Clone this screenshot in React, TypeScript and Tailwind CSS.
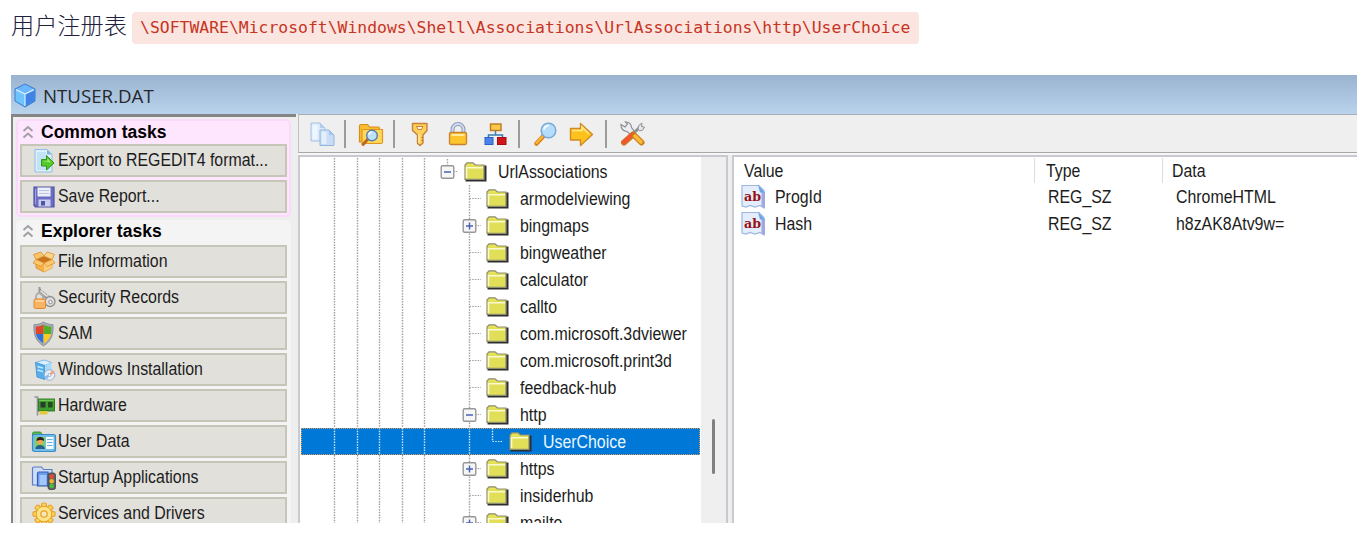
import type { ReactNode } from 'react';

const uiFont = "font-['Liberation_Sans',Arial,sans-serif]";

/* ---------- shared text ---------- */

function Label({ children, className = '' }: { children: ReactNode; className?: string }) {
  return (
    <span
      className={`inline-block origin-left scale-x-[0.908] whitespace-pre text-[17.5px] leading-[20px] ${uiFont} ${className}`}
    >
      {children}
    </span>
  );
}

/* ---------- icons: title and sidebar ---------- */

function CubeIcon() {
  return (
    <svg width="22" height="25" viewBox="0 0 22 25" className="shrink-0">
      <path d="M11 1 21 6v12l-10 6L1 18V6z" fill="#4c9df5" stroke="#3b78c9" strokeWidth="1" />
      <path d="M11 1.6 20.4 6.4 11 11 1.6 6.4z" fill="#6db7ff" />
      <path d="M1.6 6.6 11 11.2v12L1.6 17.8z" fill="#6fc3ff" />
      <path d="M20.4 6.6 11 11.2v12l9.4-5.4z" fill="#3f83e6" />
      <path d="M2 6.6 11 11l9-4.4M11 11v12" fill="none" stroke="#d4efff" strokeWidth="1.2" />
    </svg>
  );
}

function ExportIcon() {
  return (
    <svg width="24" height="26" viewBox="0 0 24 26">
      <path d="M3 1.5h12l5 5V24H3z" fill="#dff0fc" stroke="#8fbfe6" strokeWidth="1" />
      <path d="M5 4h9v5h4v13H5z" fill="#c3e2f8" />
      <path d="M15 1.5v5h5z" fill="#7fb4e2" />
      <path d="M10 11.5h5V7.5l7.5 7.5-7.5 7v-4h-5z" fill="#55c92c" stroke="#2f9417" strokeWidth="1" transform="translate(-.5 0)" />
      <path d="M10.5 13h5v-2.5l3.5 4z" fill="#a3ec70" />
    </svg>
  );
}

function SaveIcon() {
  return (
    <svg width="24" height="26" viewBox="0 0 24 26">
      <path d="M2 3h20v20H3.500L2 21.500z" fill="#6c6ec4" stroke="#50529f" strokeWidth="1.2" />
      <rect x="5.500" y="3.500" width="13" height="9" fill="#eceef8" />
      <path d="M7 6.500h10M7 9.500h10" stroke="#bfc3e4" strokeWidth="1" />
      <rect x="6.500" y="15.500" width="12" height="7" fill="#c9cdee" />
      <rect x="9" y="17" width="4" height="4.500" fill="#5053a6" />
      <path d="M3.500 5v15" stroke="#9fa2e6" strokeWidth="1" />
    </svg>
  );
}

function BoxIcon() {
  return (
    <svg width="24" height="26" viewBox="0 0 24 26">
      <path d="M4 10.500 12 14l8-3.500v8.500l-8 4-8-4z" fill="#f6b04b" stroke="#d98a24" strokeWidth=".8" />
      <path d="M12 14v9l8-4v-8.500z" fill="#fccb78" />
      <path d="M4 10.500 12 7l8 3.500-8 3.500z" fill="#c9751d" />
      <path d="M1.500 5.500 9 3l3 4-8 3.500z" fill="#fbc36a" stroke="#dc912e" strokeWidth=".8" />
      <path d="M22.500 5.500 15 3l-3 4 8 3.500z" fill="#fdd48c" stroke="#dc912e" strokeWidth=".8" />
      <path d="M4 10.500 1 14l8 3.500 3-3.500zM20 10.500l3 3.500-8 3.500-3-3.500z" fill="#fdc872" stroke="#dc912e" strokeWidth=".8" />
    </svg>
  );
}

function SecurityIcon() {
  return (
    <svg width="24" height="26" viewBox="0 0 24 26">
      <path d="M7.500 2v6l10 7" fill="none" stroke="#999" strokeWidth="2" />
      <path d="M8 4l10 8" stroke="#777" strokeWidth="1" strokeDasharray="1 1" />
      <circle cx="18" cy="16.500" r="5" fill="#ddd" stroke="#8f8f8f" strokeWidth="1.300" />
      <circle cx="18.500" cy="17" r="1.700" fill="#fff" stroke="#888" />
      <path d="M4 14v-2.500a3.500 3.500 0 0 1 7 0V14" fill="none" stroke="#aaa" strokeWidth="1.800" />
      <rect x="2" y="14" width="11.500" height="9.500" rx="1.500" fill="#f9b463" stroke="#de8a36" />
      <path d="M3.500 16h8.500" stroke="#fddba8" strokeWidth="1.500" />
    </svg>
  );
}

function ShieldIcon() {
  return (
    <svg width="24" height="26" viewBox="0 0 24 26">
      <path d="M11.500 1c3 2 6 2.500 9.500 2.700.6 9.300-1.500 16.300-9.500 21.300C3.500 20 1.400 13 2 3.700 5.500 3.500 8.500 3 11.500 1z" fill="#a9adb8" stroke="#80838e" strokeWidth=".8" />
      <path d="M11.500 3.500v9.500H4C3.500 10.500 3.600 8 3.800 5.500c3 0 5.200-.5 7.700-2z" fill="#e2452a" />
      <path d="M11.500 3.500v9.500H19c.5-2.500.4-5 .2-7.500-3 0-5.200-.5-7.700-2z" fill="#55ae25" />
      <path d="M11.500 13v9.500C7.500 20 4.800 17 4 13z" fill="#2e73dc" />
      <path d="M11.500 13v9.500c4-2.500 6.700-5.500 7.500-9.500z" fill="#fbcb23" />
    </svg>
  );
}

function InstallIcon() {
  return (
    <svg width="24" height="26" viewBox="0 0 24 26">
      <path d="M3.500 5.500 12 3l7.500 2.500L12 9z" fill="#d9f1ff" stroke="#6fb0df" strokeWidth=".8" />
      <path d="M3.500 5.500 13 8.500v14L5 20z" fill="#58aeea" stroke="#3f8fcf" strokeWidth=".8" />
      <path d="M13 8.500l6.500-3V19L13 22.500z" fill="#a9dafa" />
      <path d="M5.500 9.500l5.500 1.700M5.500 13l5.500 1.700" stroke="#c9ecff" strokeWidth="1.400" />
      <circle cx="17.500" cy="18" r="5.300" fill="#e6eef8" stroke="#94aacb" strokeWidth=".9" />
      <path d="M17.500 18l2-4.800a5 5 0 0 1 2.900 3.400z" fill="#f3a37b" />
      <path d="M17.500 18l-4.800 1a5 5 0 0 0 2.500 3.300z" fill="#8abdf0" />
      <circle cx="17.500" cy="18" r="1.500" fill="#fff" stroke="#7f9cc4" strokeWidth=".8" />
    </svg>
  );
}

function HardwareIcon() {
  return (
    <svg width="24" height="26" viewBox="0 0 24 26">
      <path d="M2.500 4H5.500v18.500" fill="none" stroke="#8f9499" strokeWidth="1.600" />
      <rect x="6.500" y="6" width="16" height="12" fill="#3f9c2f" stroke="#2a7620" strokeWidth=".9" />
      <rect x="8.500" y="9" width="5" height="5.500" fill="#2b3a2a" />
      <rect x="16" y="9" width="4.500" height="5.500" fill="#224e1e" />
      <path d="M7.500 18v3.500h8V18" fill="#e3c93b" />
      <path d="M7 7.300h15" stroke="#80d165" strokeWidth="1" />
    </svg>
  );
}

function UserDataIcon() {
  return (
    <svg width="26" height="26" viewBox="0 0 26 26">
      <path d="M1.500 7V4.500Q1.500 3 3 3h6.500l2 2.500H1.500z" fill="#56b84c" stroke="#378c39" strokeWidth=".9" />
      <rect x="1.500" y="5.500" width="23" height="17" rx="2" fill="#71bdea" stroke="#3c8dc6" strokeWidth="1.200" />
      <rect x="4" y="8" width="10" height="12" fill="#7ed257" />
      <circle cx="9" cy="12.500" r="3" fill="#f0a25c" />
      <path d="M5.500 12q0-4.500 4.500-4 3.500.5 3 4-3-2-7.500 0z" fill="#2d2016" />
      <path d="M4.500 20q0-4 4.500-4t5 4z" fill="#27618f" />
      <rect x="15" y="8" width="7.500" height="12" fill="#f3fbff" />
      <path d="M16 10.500h5.500M16 13.500h5.500M16 16.500h5.500" stroke="#6cb1de" strokeWidth="1.200" />
    </svg>
  );
}

function StartupIcon() {
  return (
    <svg width="26" height="26" viewBox="0 0 26 26">
      <path d="M1.500 20V3.500Q1.500 2 3 2h7.500l2 2.500H21V20z" fill="#cfdcf5" stroke="#5b7fc6" strokeWidth="1.200" />
      <path d="M6.500 21V8.500Q6.500 7 8 7h9v14z" fill="#6d9deb" stroke="#325fb5" strokeWidth="1.200" />
      <path d="M8.500 10h7v10h-7z" fill="#a3c7fa" />
      <rect x="17" y="8" width="7.500" height="16.500" rx="2" fill="#5f6266" stroke="#3c3e42" strokeWidth=".8" />
      <circle cx="20.700" cy="11.500" r="2.200" fill="#ee4630" />
      <circle cx="20.700" cy="16.200" r="2.200" fill="#f8b72b" />
      <circle cx="20.700" cy="21" r="2.200" fill="#46c33c" />
    </svg>
  );
}

const gearTeeth = [0, 45, 90, 135, 180, 225, 270, 315];

function GearIcon() {
  return (
    <svg width="24" height="26" viewBox="0 0 24 26">
      {gearTeeth.map((angle) => (
        <rect key={angle} x="9.600" y="2" width="4.800" height="6" rx="1.500" fill="#fbd55e" stroke="#e9a22a" strokeWidth="1.200" transform={`rotate(${angle} 12 13)`} />
      ))}
      <circle cx="12" cy="13" r="7.800" fill="#fddf74" stroke="#e9a22a" strokeWidth="1" />
      <circle cx="12" cy="13" r="6.800" fill="#fde48a" />
      <circle cx="12" cy="13" r="3.200" fill="#f3e6bd" stroke="#e9a22a" strokeWidth="1.300" />
    </svg>
  );
}

function CollapseIcon() {
  return (
    <svg width="12" height="14" viewBox="0 0 12 14" className="shrink-0">
      <path d="M1.500 6 6 2l4.500 4M1.500 12.500 6 8.500l4.500 4" fill="none" stroke="#a39ea5" strokeWidth="2" />
    </svg>
  );
}

/* ---------- icons: toolbar ---------- */

function CopyIcon() {
  return (
    <svg width="26" height="26" viewBox="0 0 26 26">
      <path d="M2 2h9l5 5v13H2z" fill="#dceafb" stroke="#a3bfe3" strokeWidth="1" />
      <path d="M3.500 3.500h5v15h-5z" fill="#eef6ff" />
      <path d="M11 2v5h5z" fill="#b3cdee" />
      <path d="M11 9h9l5 5v10.500H11z" fill="#c9def6" stroke="#94b5e0" strokeWidth="1" />
      <path d="M12.500 10.500h5v12.500h-5z" fill="#e3effc" />
      <path d="M20 9v5h5z" fill="#a5c4eb" />
    </svg>
  );
}

function FolderSearchIcon() {
  return (
    <svg width="26" height="26" viewBox="0 0 26 26">
      <path d="M1.500 21V5Q1.500 3.500 3 3.500h6.500l2 2.500H20q1.500 0 1.500 1.500V21z" fill="#f9bd2f" stroke="#d98e1b" strokeWidth="1.200" />
      <path d="M4 8.500h20.500V21q0 1.500-1.500 1.500H4z" fill="#ffd75a" stroke="#de961f" strokeWidth="1.200" />
      <path d="M10 18l-5 5.500" stroke="#b96a1d" strokeWidth="3" strokeLinecap="round" />
      <circle cx="14" cy="14.500" r="5.300" fill="#bfe2fb" stroke="#557fb2" strokeWidth="1.400" />
      <path d="M11 14q0-3 3-3" fill="none" stroke="#fff" strokeWidth="1.400" />
    </svg>
  );
}

function KeyIcon() {
  return (
    <svg width="26" height="26" viewBox="0 0 26 26">
      <path d="M5.500 2.500h14.500v7l-4 4.500v8l-3 2.500-2.500-2v-8.500l-5-4.500z" fill="#fbd15b" stroke="#c9803a" strokeWidth="1.400" strokeLinejoin="round" />
      <path d="M9.500 5.500h6.500l-1.500 3h-3.500z" fill="#fff6e0" stroke="#c9803a" strokeWidth="1" />
      <path d="M12 13v9" stroke="#fff0b0" strokeWidth="1.300" />
      <path d="M16 16.500h-1.500M16 19.500h-1.500" stroke="#b56d2a" strokeWidth="1" />
    </svg>
  );
}

function LockIcon() {
  return (
    <svg width="26" height="26" viewBox="0 0 26 26">
      <path d="M7.500 12V8.500a5.500 5.500 0 0 1 11 0V12" fill="none" stroke="#8d9dbd" strokeWidth="4" />
      <path d="M7.500 12V8.500a5.500 5.500 0 0 1 11 0V12" fill="none" stroke="#d5ddef" strokeWidth="1.800" />
      <rect x="4.500" y="11.500" width="17" height="12" rx="1.500" fill="#fcc52d" stroke="#c9812e" strokeWidth="1.300" />
      <path d="M6.500 14h13" stroke="#ffeb9b" strokeWidth="2" />
    </svg>
  );
}

function NetworkIcon() {
  return (
    <svg width="26" height="26" viewBox="0 0 26 26">
      <path d="M12.500 9v5M5.500 18v-4h14v4" fill="none" stroke="#377fb5" strokeWidth="1.500" />
      <rect x="7.500" y="3" width="10.500" height="6.500" fill="#fcc94c" stroke="#bd7a1c" strokeWidth="1.400" />
      <rect x="2" y="16.500" width="8" height="7" fill="#4b83ea" stroke="#2c60c8" strokeWidth="1" />
      <rect x="14.500" y="16.500" width="8.500" height="7" fill="#d3141b" stroke="#a30d12" strokeWidth="1" />
    </svg>
  );
}

function MagnifierIcon() {
  return (
    <svg width="26" height="26" viewBox="0 0 26 26">
      <path d="M10.500 15 3.500 22.500" stroke="#d98318" strokeWidth="4.500" strokeLinecap="round" />
      <path d="M9.500 15.500 3.500 22" stroke="#fdb63d" strokeWidth="2.200" strokeLinecap="round" />
      <circle cx="15.500" cy="9.500" r="7.300" fill="#b3ddfb" stroke="#7aa8d8" strokeWidth="1.500" />
      <path d="M11 9q.5-4.500 5-4.500" fill="none" stroke="#effaff" strokeWidth="2" />
    </svg>
  );
}

function ArrowIcon() {
  return (
    <svg width="26" height="26" viewBox="0 0 26 26">
      <path d="M1.500 7.500h10V2.500L23.500 13.500 11.500 24.500v-5.500h-10z" fill="#fdc21b" stroke="#d28b22" strokeWidth="1.400" strokeLinejoin="round" />
      <path d="M3 9.500h10V6l7 7" fill="none" stroke="#ffe98a" strokeWidth="1.600" />
    </svg>
  );
}

function ToolsIcon() {
  return (
    <svg width="27" height="26" viewBox="0 0 27 26">
      <path d="M22 5 4.500 22" stroke="#8f9197" strokeWidth="3" />
      <path d="M19 8q-.5-4 4-6l-.5 3.500 3 .5q-1 4-5 4z" fill="#e4e6ea" stroke="#8f9197" strokeWidth="1" />
      <path d="M2 3.500 6 6l2.500-3L6.500 1Q12 .8 12.500 6.500l3 4-3.500 3.500-4-3.500Q2 10 2 3.500z" fill="#eceef1" stroke="#8d8f94" strokeWidth="1.200" />
      <path d="M14 13.500 5 21.500" stroke="#d3702a" strokeWidth="6" strokeLinecap="round" />
      <path d="M13.500 13.500 5 21" stroke="#f2552c" strokeWidth="3.500" strokeLinecap="round" />
      <path d="M16 15l6.500 6.500" stroke="#c97d1d" strokeWidth="6" strokeLinecap="round" />
      <path d="M16 15l6 6" stroke="#fdbb35" strokeWidth="3.500" strokeLinecap="round" />
    </svg>
  );
}

/* ---------- icons: tree and list ---------- */

function FolderIcon() {
  return (
    <svg width="23" height="20" viewBox="0 0 23 20" className="shrink-0">
      <path d="M1.500 19.500H22.500V3.500H20V17H1.500z" fill="#2e2e2e" />
      <path d="M1 17.300V3l2-2.200h6L11.500 3H20v14.300z" fill="#e1df58" stroke="#8d8d74" strokeWidth="1.200" />
      <path d="M2.500 16V5.800H19" fill="none" stroke="#faf9cf" strokeWidth="1.500" />
      <path d="M3 3.500 4 2h4.500L10 3.700z" fill="#e8e455" />
    </svg>
  );
}

function StringValueIcon() {
  return (
    <svg width="25" height="25" viewBox="0 0 25 25" className="shrink-0">
      <path d="M1 1.500h17l5 5V24l-4-2.500-5 1.500-5-1.500-4 1.500-4-1z" fill="#e3edfb" stroke="#9fb6e3" strokeWidth="1.200" />
      <path d="M20.500 8H24v16l-3.500-2z" fill="#9fa9dc" />
      <path d="M17 1l7 7.500h-5z" fill="#6fa4e3" />
      <text x="11.600" y="17" textAnchor="middle" fontFamily="DejaVu Serif, serif" fontWeight="700" fontSize="13.500" textLength="17" lengthAdjust="spacingAndGlyphs" fill="#971015">
        ab
      </text>
    </svg>
  );
}

/* ---------- sidebar ---------- */

function TaskButton({ icon, text }: { icon: ReactNode; text: string }) {
  return (
    <div className="flex h-[33px] w-[267px] shrink-0 items-center border-2 border-[#c6c6b8] bg-[#e1e0db] text-[#1c1c1c]">
      <span className="flex w-[36px] shrink-0 justify-center pl-[7px]">{icon}</span>
      <Label className="-mt-px">{text}</Label>
    </div>
  );
}

function GroupTitle({ text }: { text: string }) {
  return (
    <div className="flex h-[25px] shrink-0 items-center gap-[7px] pb-[3px] pl-[2px]">
      <CollapseIcon />
      <span className={`text-[17.5px] font-bold leading-[20px] text-black ${uiFont}`}>{text}</span>
    </div>
  );
}

const explorerTasks: { text: string; icon: ReactNode }[] = [
  { text: 'File Information', icon: <BoxIcon /> },
  { text: 'Security Records', icon: <SecurityIcon /> },
  { text: 'SAM', icon: <ShieldIcon /> },
  { text: 'Windows Installation', icon: <InstallIcon /> },
  { text: 'Hardware', icon: <HardwareIcon /> },
  { text: 'User Data', icon: <UserDataIcon /> },
  { text: 'Startup Applications', icon: <StartupIcon /> },
  { text: 'Services and Drivers', icon: <GearIcon /> },
];

function Sidebar() {
  return (
    <aside className="flex w-[285px] shrink-0 flex-col gap-[3px] overflow-hidden border-l-2 border-t-[3px] border-[#858585] bg-[#eeeeee] pl-[3px] pt-[2px]">
      <section className="flex h-[98px] w-[275px] shrink-0 flex-col rounded-[5px] border-2 border-[#fbd9fb] bg-[#ffe6ff] pl-[2px]">
        <GroupTitle text="Common tasks" />
        <div className="-mt-[2px] flex flex-col gap-[3px]">
          <TaskButton icon={<ExportIcon />} text="Export to REGEDIT4 format..." />
          <TaskButton icon={<SaveIcon />} text="Save Report..." />
        </div>
      </section>
      <section className="flex w-[275px] shrink-0 flex-col rounded-[5px] bg-[#f4f4f4] pl-[4px]">
        <GroupTitle text="Explorer tasks" />
        <div className="flex flex-col gap-[3px]">
          {explorerTasks.map((t) => (
            <TaskButton key={t.text} icon={t.icon} text={t.text} />
          ))}
        </div>
      </section>
    </aside>
  );
}

/* ---------- toolbar ---------- */

function Separator() {
  return <span className="h-[28px] w-[2px] shrink-0 bg-[#9b9b9b]" />;
}

function Toolbar() {
  return (
    <div className="flex h-[39px] shrink-0 items-center border-b border-l border-t border-b-[#a8a8a8] border-l-[#c0c0c0] border-t-[#a9adb3] bg-[#efefef] pl-[10px]">
      <CopyIcon />
      <span className="w-[9px]" />
      <Separator />
      <span className="w-[12px]" />
      <FolderSearchIcon />
      <span className="w-[9px]" />
      <Separator />
      <span className="w-[12px]" />
      <KeyIcon />
      <span className="w-[12px]" />
      <LockIcon />
      <span className="w-[12px]" />
      <NetworkIcon />
      <span className="w-[9px]" />
      <Separator />
      <span className="w-[13px]" />
      <MagnifierIcon />
      <span className="w-[10px]" />
      <ArrowIcon />
      <span className="w-[10px]" />
      <Separator />
      <span className="w-[12px]" />
      <ToolsIcon />
    </div>
  );
}

/* ---------- registry tree ---------- */

type NodeKind = 'leaf' | 'plus' | 'minus';

interface TreeItem {
  name: string;
  kind: NodeKind;
  level: number;
  selected?: boolean;
}

const treeItems: TreeItem[] = [
  { name: 'UrlAssociations', kind: 'minus', level: 0 },
  { name: 'armodelviewing', kind: 'leaf', level: 1 },
  { name: 'bingmaps', kind: 'plus', level: 1 },
  { name: 'bingweather', kind: 'leaf', level: 1 },
  { name: 'calculator', kind: 'leaf', level: 1 },
  { name: 'callto', kind: 'leaf', level: 1 },
  { name: 'com.microsoft.3dviewer', kind: 'leaf', level: 1 },
  { name: 'com.microsoft.print3d', kind: 'leaf', level: 1 },
  { name: 'feedback-hub', kind: 'leaf', level: 1 },
  { name: 'http', kind: 'minus', level: 1 },
  { name: 'UserChoice', kind: 'leaf', level: 2, selected: true },
  { name: 'https', kind: 'plus', level: 1 },
  { name: 'insiderhub', kind: 'leaf', level: 1 },
  { name: 'mailto', kind: 'plus', level: 1 },
];

function Guide({ light }: { light?: boolean }) {
  return (
    <svg width="22.500" height="27" viewBox="0 0 22.5 27" className="shrink-0">
      <path d="M11.500 0v27" stroke={light ? '#d3e4f3' : '#a0a0a0'} strokeWidth="1.400" strokeDasharray="1.500 1.200" />
    </svg>
  );
}

function Branch({ kind, level }: { kind: NodeKind; level: number }) {
  const color = level === 2 ? '#d5e6f6' : '#a0a0a0';
  const vertical = level === 1 ? 'M11.500 0v27' : level === 2 ? 'M11.500 0v13.500' : 'M11.500 1v6';
  return (
    <svg width="22.500" height="27" viewBox="0 0 22.5 27" className="shrink-0">
      <path d={vertical} stroke={color} strokeWidth="1.400" strokeDasharray="1.500 1.200" />
      <path d="M11.500 13.500h12" stroke={color} strokeWidth="1.200" strokeDasharray="1.500 1.200" />
      {kind !== 'leaf' && (
        <g>
          <rect x="5.200" y="7.700" width="12.600" height="12.600" rx="1.500" fill="#f6f6f6" stroke="#979797" strokeWidth="1.400" />
          <path d="M8 14h7" stroke="#4a62b4" strokeWidth="1.500" />
          {kind === 'plus' && <path d="M11.500 10.500v7" stroke="#4a62b4" strokeWidth="1.500" />}
        </g>
      )}
    </svg>
  );
}

function TreeRow({ item }: { item: TreeItem }) {
  const tone = item.selected ? 'bg-[#0078d7] text-[#eaf5ff] outline-1 -outline-offset-1 outline-dotted outline-[#d99a5c]' : 'text-[#1c1c1c]';
  return (
    <div className={`flex h-[27px] w-[399px] shrink-0 items-center pl-[22px] ${tone}`}>
      {[0, 1, 2, 3, 4].map((n) => (
        <Guide key={n} light={item.selected} />
      ))}
      {item.level >= 1 && <span className="w-[22.5px] shrink-0" />}
      {item.level >= 2 && <Guide light />}
      <Branch kind={item.kind} level={item.level} />
      <span className="flex w-[39.5px] shrink-0 pl-[5.5px]">
        <FolderIcon />
      </span>
      <Label>{item.name}</Label>
    </div>
  );
}

function Tree() {
  return (
    <div className="flex w-[430px] shrink-0 overflow-hidden border-l-2 border-r-2 border-t-2 border-[#c9c9cf] bg-white pl-px">
      <div className="flex w-[400px] shrink-0 flex-col pt-px">
        {treeItems.map((item) => (
          <TreeRow key={item.name} item={item} />
        ))}
      </div>
      <div className="flex grow justify-end bg-[#efefef] pr-[11px]">
        <span className="mt-[262px] h-[55px] w-[3px] rounded-full bg-[#808080]" />
      </div>
    </div>
  );
}

/* ---------- value list ---------- */

const values = [
  { name: 'ProgId', type: 'REG_SZ', data: 'ChromeHTML' },
  { name: 'Hash', type: 'REG_SZ', data: 'h8zAK8Atv9w=' },
];

function ValueList() {
  return (
    <div className="flex grow flex-col overflow-hidden border-l-2 border-t-2 border-[#c9c9cf] bg-white text-[#1c1c1c]">
      <div className="flex h-[26px] shrink-0 pt-px">
        <div className="flex w-[301px] items-center border-r border-[#dedede] pl-[10px]">
          <Label>Value</Label>
        </div>
        <div className="flex w-[128px] items-center border-r border-[#dedede] pl-[11px]">
          <Label>Type</Label>
        </div>
        <div className="flex items-center pl-[9px]">
          <Label>Data</Label>
        </div>
      </div>
      {values.map((v) => (
        <div key={v.name} className="flex h-[27px] shrink-0 items-center">
          <span className="flex w-[41px] shrink-0 pl-[7px]">
            <StringValueIcon />
          </span>
          <span className="w-[273px]">
            <Label>{v.name}</Label>
          </span>
          <span className="w-[128px]">
            <Label>{v.type}</Label>
          </span>
          <Label>{v.data}</Label>
        </div>
      ))}
    </div>
  );
}

/* ---------- page ---------- */

export default function App() {
  return (
    <main className="flex h-[537px] w-[1357px] flex-col overflow-hidden bg-white pl-[11px]">
      <p className="flex h-[75px] shrink-0 items-start pt-[12px]">
        <span className="-mt-[4px] w-[121px] whitespace-nowrap font-['Noto_Sans_CJK_SC',sans-serif] text-[23.2px] font-light leading-[32px] text-[#20203a]">
          用户注册表
        </span>
        <code className="h-[32px] w-[787px] whitespace-nowrap rounded-[4px] bg-[#fae5e0] pl-[8px] font-['DejaVu_Sans_Mono',monospace] text-[16.42px] leading-[32px] text-[#c7341f]">
          \SOFTWARE\Microsoft\Windows\Shell\Associations\UrlAssociations\http\UserChoice
        </code>
      </p>
      <div className="flex h-[448px] shrink-0 flex-col overflow-hidden">
        <header className="flex h-[39px] shrink-0 items-center gap-[7px] bg-linear-to-b from-[#9ab4d0] to-[#b9d3ed] pl-[3px] pt-[2px]">
          <CubeIcon />
          <span className="font-['Open_Sans',sans-serif] text-[18.7px] leading-[24px] text-[#26282c]">NTUSER.DAT</span>
        </header>
        <div className="flex min-h-0 grow bg-[#eeeeee]">
          <Sidebar />
          <div className="flex min-w-0 grow flex-col pl-[2px]">
            <Toolbar />
            <div className="flex min-h-0 grow gap-[4px] border-t-2 border-[#f6f6f6]">
              <Tree />
              <ValueList />
            </div>
          </div>
        </div>
      </div>
    </main>
  );
}
